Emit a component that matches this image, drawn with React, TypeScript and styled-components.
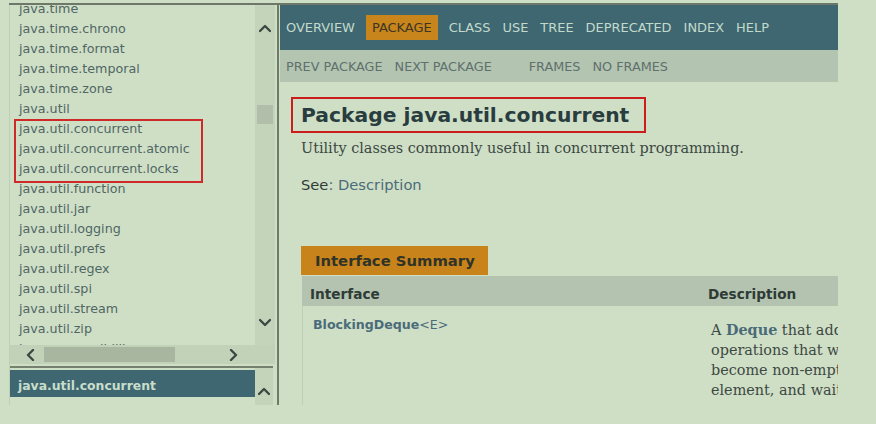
import React from "react";
import styled, { createGlobalStyle, css } from "styled-components";

const sans = `"DejaVu Sans", Verdana, sans-serif`;
const serif = `"DejaVu Serif", Georgia, serif`;

const GlobalStyle = createGlobalStyle`
  html, body { margin: 0; padding: 0; background: #cfdfc5; overflow: hidden; }
  * { box-sizing: border-box; }
`;

const Page = styled.div`
  width: 876px;
  height: 424px;
  padding: 3px 38px 0 9px;
  display: flex;
  align-items: flex-start;
  background: #cfdfc5;
  font-family: ${sans};
`;

const Frameset = styled.div`
  display: flex;
  width: 829px;
  height: 402px;
  border-top: 2px solid #6d7869;
`;

const LeftFrame = styled.div`
  width: 267px;
  display: flex;
  flex-direction: column;
  border-left: 1px solid #bfceb6;
`;

const TopPane = styled.div`
  display: grid;
  grid-template-columns: 245px 20px;
  grid-template-rows: 340px 19px;
`;

const Viewport = styled.div`
  overflow: hidden;
  background: #cfdfc6;
`;

const PackageList = styled.ul`
  list-style: none;
  margin: -6px 0 0;
  padding: 0 0 0 9px;
`;

const PackageItem = styled.li`
  height: 20px;
  line-height: 20px;
  font-size: 12.7px;
  color: #506664;
  white-space: nowrap;
`;

const MarkedGroup = styled.li`
  position: relative;
  list-style: none;
  &::after {
    content: "";
    position: absolute;
    top: 0;
    left: -5px;
    width: 185px;
    bottom: -4px;
    border: 2px solid #cf2a2a;
    pointer-events: none;
  }
`;

const MarkedList = styled.ul`
  list-style: none;
  margin: 0;
  padding: 0;
`;

const VScroll = styled.div<{ $bottom?: boolean }>`
  background: #c4d4bb;
  display: flex;
  flex-direction: column;
  align-items: center;
  ${(p) =>
    p.$bottom
      ? css`
          justify-content: flex-end;
          padding-bottom: 8px;
        `
      : css`
          padding-top: 18px;
          padding-bottom: 17px;
        `}
`;

const VThumb = styled.div`
  width: 16px;
  height: 19px;
  margin-top: 71px;
  background: #b1bea9;
`;

const Spacer = styled.div`
  flex: 1;
`;

const HScroll = styled.div`
  grid-column: 1 / span 2;
  background: #c2d2b9;
  display: flex;
  align-items: center;
  padding-left: 15px;
`;

const HThumb = styled.div`
  width: 131px;
  height: 15px;
  margin-left: 8px;
  margin-right: 53px;
  background: #a8b6a0;
`;

const FrameSeparator = styled.div`
  width: 263px;
  height: 2px;
  margin-top: 2px;
  background: #75806f;
`;

const BottomPane = styled.div`
  flex: 1;
  display: flex;
`;

const BottomList = styled.div`
  width: 245px;
  background: #cfdfc6;
  padding-top: 2px;
`;

const SelectedRow = styled.div`
  height: 27px;
  background: #3e6771;
  color: #c9ddcb;
  font-size: 12.4px;
  font-weight: bold;
  line-height: 31px;
  padding-left: 8px;
  white-space: nowrap;
`;

const BottomScroll = styled(VScroll)`
  width: 18px;
`;

const FrameDivider = styled.div`
  width: 2px;
  margin: 0 1px;
  background: #6f7a6b;
`;

const RightFrame = styled.div`
  width: 558px;
  overflow: hidden;
  display: flex;
  flex-direction: column;
`;

const TopNav = styled.ul`
  height: 45px;
  margin: 0;
  padding: 0;
  list-style: none;
  background: #3e6771;
  display: flex;
  align-items: center;
  flex-shrink: 0;
`;

const NavItem = styled.li<{ $active?: boolean }>`
  padding: 5px 6px;
  font-size: 12.95px;
  line-height: 15px;
  color: #c3dacb;
  text-transform: uppercase;
  white-space: nowrap;
  ${(p) =>
    p.$active &&
    css`
      background: #c8851c;
      color: #3b3625;
      margin: 0 5px;
    `}
`;

const SubNav = styled.div`
  height: 32px;
  background: #b3c4b1;
  display: flex;
  align-items: center;
  flex-shrink: 0;
`;

const SubList = styled.ul<{ $gap?: number }>`
  margin: 0 0 0 ${(p) => p.$gap ?? 0}px;
  padding: 0;
  list-style: none;
  display: flex;
`;

const SubItem = styled.li`
  padding: 0 6px;
  font-size: 12.8px;
  line-height: 15px;
  color: #5f706d;
  white-space: nowrap;
`;

const Content = styled.div`
  padding: 15px 0 0 21px;
  display: flex;
  flex-direction: column;
  align-items: flex-start;
`;

const TitleBox = styled.div`
  margin-left: -10px;
  border: 2px solid #cc1d1d;
  padding: 1px 15px 0 8px;
`;

const Title = styled.h1`
  margin: 0;
  font-size: 20.3px;
  font-weight: bold;
  line-height: 31px;
  color: #293d40;
  white-space: nowrap;
`;

const Lead = styled.div`
  margin-top: 6px;
  font-family: ${serif};
  font-size: 14.4px;
  line-height: 18px;
  color: #3b4843;
  white-space: nowrap;
`;

const SeeLine = styled.div`
  margin-top: 18px;
  font-size: 14.7px;
  line-height: 20px;
  color: #4b6b79;
  white-space: nowrap;
`;

const SeeLabel = styled.span`
  color: #2f3b37;
`;

const Summary = styled.div`
  margin-top: 51px;
  width: 900px;
`;

const Caption = styled.div`
  display: inline-block;
  height: 29px;
  line-height: 30px;
  padding: 0 13px 0 14px;
  background: #c8841b;
  color: #2f3328;
  font-size: 14.8px;
  font-weight: bold;
`;

const HeaderRow = styled.div`
  margin: 1px 0 0 1px;
  height: 30px;
  display: grid;
  grid-template-columns: 399px 1fr;
  align-items: start;
  padding-top: 10px;
  background: #b3c3b0;
  font-size: 13.65px;
  line-height: 16px;
  font-weight: bold;
  color: #2e3b36;
`;

const HeaderCell = styled.div<{ $pad: number }>`
  padding-left: ${(p) => p.$pad}px;
`;

const BodyRow = styled.div`
  margin-left: 1px;
  height: 99px;
  display: grid;
  grid-template-columns: 398px 1fr;
  border-left: 1px solid #bfcfb7;
`;

const NameCell = styled.div`
  padding: 11px 0 0 10px;
  font-size: 12.6px;
  line-height: 16px;
  color: #4a6b79;
  white-space: nowrap;
`;

const TypeName = styled.span`
  font-weight: bold;
`;

const DescCell = styled.div`
  padding: 14px 0 0 10px;
  font-family: ${serif};
  font-size: 14.4px;
  line-height: 20px;
  color: #3d4944;
  white-space: nowrap;
`;

const Strong = styled.span`
  font-weight: bold;
  color: #4a6b79;
`;

const Chevron = ({ dir }: { dir: "up" | "down" | "left" | "right" }) => {
  const pts = {
    up: "1,8 6,3 11,8",
    down: "1,3 6,8 11,3",
    left: "8,1 3,6 8,11",
    right: "3,1 8,6 3,11",
  }[dir];
  const horiz = dir === "left" || dir === "right";
  return (
    <svg
      width={horiz ? 11 : 12}
      height={horiz ? 12 : 11}
      viewBox={horiz ? "0 0 11 12" : "0 0 12 11"}
      style={{ display: "block", flexShrink: 0 }}
    >
      <polyline
        points={pts}
        fill="none"
        stroke="#3d4842"
        strokeWidth="2.4"
        strokeLinecap="round"
        strokeLinejoin="round"
      />
    </svg>
  );
};

const before = [
  "java.time",
  "java.time.chrono",
  "java.time.format",
  "java.time.temporal",
  "java.time.zone",
  "java.util",
];
const marked = ["java.util.concurrent", "java.util.concurrent.atomic", "java.util.concurrent.locks"];
const after = [
  "java.util.function",
  "java.util.jar",
  "java.util.logging",
  "java.util.prefs",
  "java.util.regex",
  "java.util.spi",
  "java.util.stream",
  "java.util.zip",
  "javax.accessibility",
];

export default function App() {
  return (
    <>
      <GlobalStyle />
      <Page>
        <Frameset>
          <LeftFrame>
            <TopPane>
              <Viewport>
                <PackageList>
                  {before.map((p) => (
                    <PackageItem key={p}>{p}</PackageItem>
                  ))}
                  <MarkedGroup>
                    <MarkedList>
                      {marked.map((p) => (
                        <PackageItem key={p}>{p}</PackageItem>
                      ))}
                    </MarkedList>
                  </MarkedGroup>
                  {after.map((p) => (
                    <PackageItem key={p}>{p}</PackageItem>
                  ))}
                </PackageList>
              </Viewport>
              <VScroll>
                <Chevron dir="up" />
                <VThumb />
                <Spacer />
                <Chevron dir="down" />
              </VScroll>
              <HScroll>
                <Chevron dir="left" />
                <HThumb />
                <Chevron dir="right" />
              </HScroll>
            </TopPane>
            <FrameSeparator />
            <BottomPane>
              <BottomList>
                <SelectedRow>java.util.concurrent</SelectedRow>
              </BottomList>
              <BottomScroll $bottom>
                <Chevron dir="up" />
              </BottomScroll>
            </BottomPane>
          </LeftFrame>
          <FrameDivider />
          <RightFrame>
            <TopNav>
              <NavItem>Overview</NavItem>
              <NavItem $active>Package</NavItem>
              <NavItem>Class</NavItem>
              <NavItem>Use</NavItem>
              <NavItem>Tree</NavItem>
              <NavItem>Deprecated</NavItem>
              <NavItem>Index</NavItem>
              <NavItem>Help</NavItem>
            </TopNav>
            <SubNav>
              <SubList>
                <SubItem>PREV PACKAGE</SubItem>
                <SubItem>NEXT PACKAGE</SubItem>
              </SubList>
              <SubList $gap={25}>
                <SubItem>FRAMES</SubItem>
                <SubItem>NO FRAMES</SubItem>
              </SubList>
            </SubNav>
            <Content>
              <TitleBox>
                <Title>Package java.util.concurrent</Title>
              </TitleBox>
              <Lead>Utility classes commonly useful in concurrent programming.</Lead>
              <SeeLine>
                <SeeLabel>See</SeeLabel>: Description
              </SeeLine>
              <Summary>
                <Caption>Interface Summary</Caption>
                <HeaderRow>
                  <HeaderCell $pad={8}>Interface</HeaderCell>
                  <HeaderCell $pad={7}>Description</HeaderCell>
                </HeaderRow>
                <BodyRow>
                  <NameCell>
                    <TypeName>BlockingDeque</TypeName>&lt;E&gt;
                  </NameCell>
                  <DescCell>
                    A <Strong>Deque</Strong> that additionally supports blocking
                    <br />
                    operations that wait for the deque to
                    <br />
                    become non-empty when retrieving an
                    <br />
                    element, and wait for space to become
                  </DescCell>
                </BodyRow>
              </Summary>
            </Content>
          </RightFrame>
        </Frameset>
      </Page>
    </>
  );
}
